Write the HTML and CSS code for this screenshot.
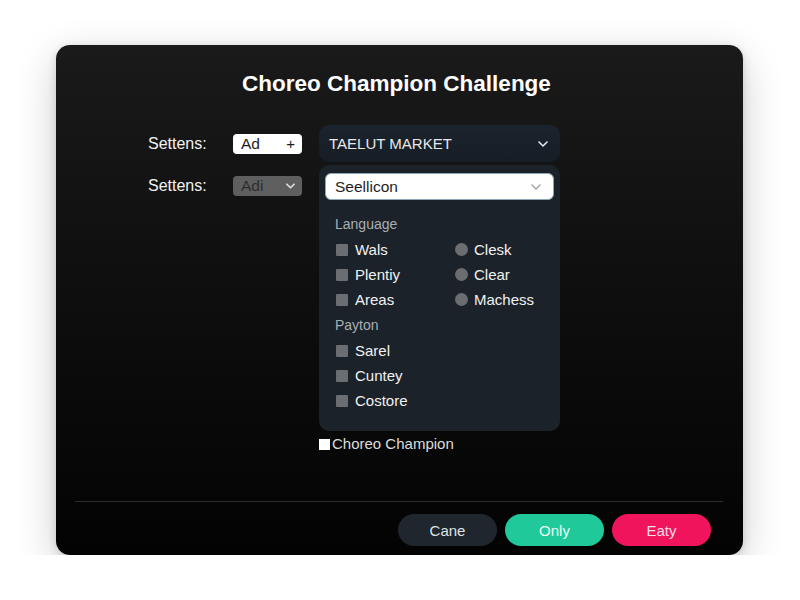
FILE: index.html
```html
<!DOCTYPE html>
<html lang="en">
<head>
  <meta charset="UTF-8">
  <meta name="viewport" content="width=device-width, initial-scale=1.0">
  <title>Choreo Champion Challenge</title>
  <link rel="stylesheet" href="styles.css">
</head>
<body>
  <div class="dialog">
    <h1 class="dialog-title">Choreo Champion Challenge</h1>

    <div class="form">
      <!-- first settings row -->
      <div class="form-row">
        <span class="form-label">Settens:</span>
        <div class="mini-input">
          <span>Ad</span>
          <span class="mini-plus">+</span>
        </div>
        <div class="market-select">
          <span>TAELUT MARKET</span>
          <svg class="chevron" width="10" height="6" viewBox="0 0 10 6"><path d="M1 1l4 4 4-4" fill="none" stroke="#e6e6e6" stroke-width="1.6" stroke-linecap="round" stroke-linejoin="round"/></svg>
        </div>
      </div>

      <!-- second settings row with the open dropdown -->
      <div class="form-row form-row-top">
        <span class="form-label offset">Settens:</span>
        <div class="mini-select offset">
          <span>Adi</span>
          <svg width="9" height="6" viewBox="0 0 10 6"><path d="M1 1l4 4 4-4" fill="none" stroke="#e0e0e0" stroke-width="1.8" stroke-linecap="round" stroke-linejoin="round"/></svg>
        </div>
        <div class="dropdown">
          <div class="dropdown-select">
            <span>Seellicon</span>
            <svg width="10" height="6" viewBox="0 0 10 6"><path d="M1 1l4 4 4-4" fill="none" stroke="#9aa0a6" stroke-width="1.4" stroke-linecap="round" stroke-linejoin="round"/></svg>
          </div>
          <div class="group-label">Language</div>
          <div class="option-grid">
            <label class="option"><span class="box"></span>Wals</label>
            <label class="option"><span class="dot"></span>Clesk</label>
            <label class="option"><span class="box"></span>Plentiy</label>
            <label class="option"><span class="dot"></span>Clear</label>
            <label class="option"><span class="box"></span>Areas</label>
            <label class="option"><span class="dot"></span>Machess</label>
          </div>
          <div class="group-label">Payton</div>
          <div class="option-grid">
            <label class="option"><span class="box"></span>Sarel</label>
            <span></span>
            <label class="option"><span class="box"></span>Cuntey</label>
            <span></span>
            <label class="option"><span class="box"></span>Costore</label>
          </div>
        </div>
      </div>

      <label class="champion"><span class="champion-box"></span>Choreo Champion</label>
    </div>

    <div class="dialog-footer">
      <div class="divider"></div>
      <div class="actions">
        <button class="btn btn-dark">Cane</button>
        <button class="btn btn-green">Only</button>
        <button class="btn btn-pink">Eaty</button>
      </div>
    </div>
  </div>
</body>
</html>
```

FILE: styles.css
```css
body {
  margin: 0;
  padding: 45px 57px 0 56px;
  background-color: #ffffff;
  font-family: "Liberation Sans", Arial, sans-serif;
  color: #f0f0f0;
}
.dialog {
  height: 510px;
  box-sizing: border-box;
  padding-top: 24px;
  display: flex;
  flex-direction: column;
  background: linear-gradient(180deg, #1a1a1a 0%, #0f0f0f 45%, #030303 100%);
  border-radius: 14px;
  box-shadow: 0 12px 40px rgba(0, 0, 0, 0.2), 0 2px 8px rgba(0, 0, 0, 0.14);
}
.dialog-title {
  margin: 0;
  padding-right: 6px;
  text-align: center;
  font-size: 22.5px;
  line-height: 30px;
  font-weight: bold;
  color: #ffffff;
}
.form {
  margin-top: 26px;
  padding-left: 92px;
}
.form-row {
  display: flex;
  align-items: center;
  height: 37px;
}
.form-row-top {
  align-items: flex-start;
  height: auto;
  margin-top: 3px;
}
.form-label {
  width: 85px;
  font-size: 16px;
  line-height: 20px;
  color: #f2f2f2;
}
.offset {
  margin-top: 11px;
}
.mini-input,
.mini-select {
  width: 69px;
  height: 20px;
  box-sizing: border-box;
  padding: 0 7px 0 8px;
  display: flex;
  align-items: center;
  justify-content: space-between;
  border-radius: 4px;
  font-size: 15.5px;
  margin-right: 17px;
}
.mini-input {
  background-color: #ffffff;
  color: #1c1c1c;
}
.mini-plus {
  font-size: 15px;
}
.mini-select {
  background-color: #5f5f5f;
  color: #2e2e2e;
}
.market-select {
  width: 241px;
  height: 37px;
  box-sizing: border-box;
  padding: 0 12px 0 10px;
  display: flex;
  align-items: center;
  justify-content: space-between;
  background: linear-gradient(180deg, #1b232c, #161d25);
  border-radius: 10px;
  font-size: 15px;
  color: #e8e8e8;
}
.dropdown {
  width: 241px;
  box-sizing: border-box;
  padding: 8px 6px 18px;
  background-color: #1b222a;
  border-radius: 10px;
}
.dropdown-select {
  height: 27px;
  box-sizing: border-box;
  padding: 0 12px 0 9px;
  display: flex;
  align-items: center;
  justify-content: space-between;
  background-color: #ffffff;
  border: 1px solid #8fa6b5;
  border-radius: 6px;
  font-size: 15.5px;
  color: #1e1e1e;
}
.group-label {
  margin-top: 12px;
  padding-left: 10px;
  font-size: 14px;
  line-height: 25px;
  color: #a9aeb4;
}
.group-label + .option-grid + .group-label {
  margin-top: 1px;
}
.option-grid {
  display: grid;
  grid-template-columns: 119px 1fr;
  padding-left: 11px;
}
.option {
  display: flex;
  align-items: center;
  font-size: 15px;
  line-height: 25px;
  color: #f1f1f1;
}
.box {
  width: 12px;
  height: 12px;
  margin-right: 7px;
  background-color: #6a6d71;
  border-radius: 1px;
}
.dot {
  width: 13px;
  height: 13px;
  margin-right: 6px;
  background-color: #6b6d70;
  border-radius: 50%;
}
.champion {
  display: flex;
  align-items: center;
  margin: 3px 0 0 171px;
  font-size: 15px;
  line-height: 20px;
  color: #dcdcdc;
}
.champion-box {
  width: 11px;
  height: 11px;
  margin-right: 2px;
  background-color: #ffffff;
}
.dialog-footer {
  margin-top: auto;
  padding-bottom: 9px;
}
.divider {
  height: 1px;
  margin: 0 20px 0 19px;
  background-color: #2c2c2c;
}
.actions {
  display: flex;
  justify-content: flex-end;
  gap: 8px;
  margin-top: 12px;
  padding-right: 32px;
}
.btn {
  width: 99px;
  height: 32px;
  border: none;
  border-radius: 16px;
  font-family: "Liberation Sans", Arial, sans-serif;
  font-size: 15px;
  cursor: pointer;
}
.btn-dark {
  background-color: #1f262e;
  color: #dfe3e6;
}
.btn-green {
  background-color: #1fc99a;
  color: #e9fff7;
}
.btn-pink {
  background-color: #f0145c;
  color: #ffdbe6;
}
```
